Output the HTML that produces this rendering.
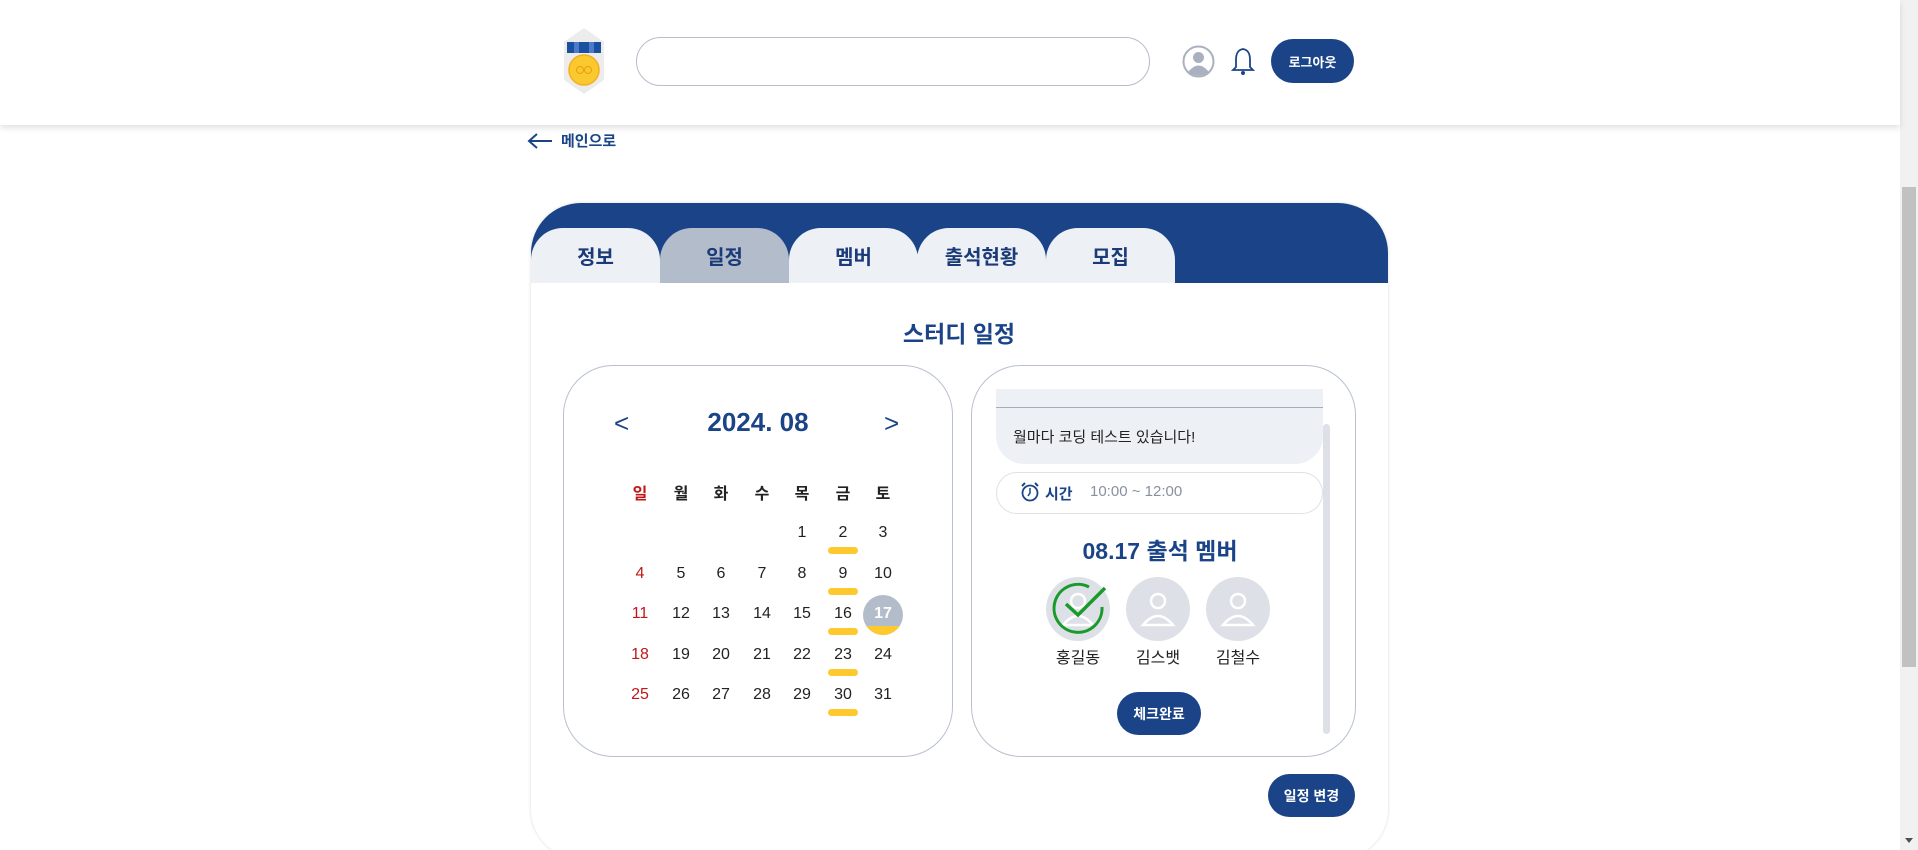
<!DOCTYPE html>
<html><head><meta charset="utf-8"><style>
*{box-sizing:border-box;margin:0;padding:0}
html{height:850px;overflow:hidden}
body{width:1918px;height:850px;overflow:hidden;background:#fff;font-family:"Liberation Sans","Noto Sans CJK KR",sans-serif;position:relative;color:#222}
.a{position:absolute}
.navy{color:#1b4488}
.hdr{left:0;top:0;width:1900px;height:125px;background:#fff;box-shadow:0 3px 6px rgba(0,0,0,.12);z-index:2}
.btn{background:#1b4488;color:#fff;border-radius:22px;font-size:14px;font-weight:bold;display:flex;align-items:center;justify-content:center}
.tab{top:228px;width:129px;height:55px;background:#edf1f6;border-radius:32px 32px 0 0;font-size:20px;font-weight:bold;color:#1b3a78;display:flex;align-items:center;justify-content:center}
.d{width:40px;text-align:center;font-size:16px;transform:translateX(-20px)}
.u{width:30px;height:7px;background:#fdc92e;border-radius:4px;transform:translateX(-15px)}
.av{width:64px;height:64px;border-radius:50%;background:#dde0e6;transform:translate(-32px,-32px)}
.nm{font-size:16px;width:80px;text-align:center;transform:translateX(-40px)}
</style></head><body>
<div class="a hdr">
  <svg class="a" style="left:563px;top:28px" width="42" height="66" viewBox="0 0 42 66">
    <polygon points="21,0 41,14 41,52 21,66 1,52 1,14" fill="#ececec"/>
    <rect x="4" y="14" width="7" height="11" fill="#1b4fa0"/><rect x="11" y="14" width="5" height="11" fill="#4d7bc9"/><rect x="16" y="14" width="10" height="11" fill="#1b4fa0"/><rect x="26" y="14" width="5" height="11" fill="#4d7bc9"/><rect x="31" y="14" width="7" height="11" fill="#1b4fa0"/>
    <circle cx="21" cy="42" r="15" fill="#fcc830" stroke="#f1b01d" stroke-width="1.5"/>
    <circle cx="17" cy="42" r="3.5" fill="none" stroke="#e6a810" stroke-width="1.2"/><circle cx="25" cy="42" r="3.5" fill="none" stroke="#e6a810" stroke-width="1.2"/>
  </svg>
  <div class="a" style="left:636px;top:37px;width:514px;height:49px;border:1px solid #b6bdcb;border-radius:25px"></div>
  <svg class="a" style="left:1182px;top:45px" width="33" height="33" viewBox="0 0 33 33"><circle cx="16.5" cy="16.5" r="15" fill="#fff" stroke="#a9b1c0" stroke-width="2"/><circle cx="16.5" cy="12.5" r="5.5" fill="#a9b1c0"/><path d="M6 27 Q16.5 14 27 27 Q16.5 34 6 27Z" fill="#a9b1c0"/></svg>
  <svg class="a" style="left:1231px;top:47px" width="24" height="29" viewBox="0 0 24 29"><path d="M12 2 C6 3 5 8 5 13 L5 20 L2 23 L22 23 L19 20 L19 13 C19 8 18 3 12 2Z" fill="none" stroke="#1b4488" stroke-width="1.8"/><circle cx="12" cy="26" r="2" fill="#1b4488"/></svg>
  <div class="a btn" style="left:1271px;top:39px;width:83px;height:44px;font-size:13px">로그아웃</div>
</div>
<div class="a" style="left:1900px;top:0;width:18px;height:850px;background:#f1f1f1"></div>
<div class="a" style="left:1902px;top:187px;width:14px;height:480px;background:#c1c1c1"></div>
<div class="a" style="left:1905px;top:838px;width:0;height:0;border-left:4px solid transparent;border-right:4px solid transparent;border-top:5px solid #505050"></div>

<svg class="a" style="left:527px;top:132px" width="26" height="18" viewBox="0 0 26 18"><path d="M25 9 H3 M10 2 L2 9 L10 16" fill="none" stroke="#1b4488" stroke-width="2"/></svg>
<div class="a navy" style="left:561px;top:130px;font-size:15px;font-weight:bold">메인으로</div>

<div class="a" style="left:531px;top:203px;width:857px;height:656px;background:#fff;border-radius:50px;box-shadow:0 0 3px rgba(0,0,0,.15);overflow:hidden">
  <div class="a" style="left:0;top:0;width:857px;height:80px;background:#1b4488"></div>
</div>
<div class="a tab" style="left:531px">정보</div>
<div class="a tab" style="left:660px;background:#b3bccb">일정</div>
<div class="a tab" style="left:789px">멤버</div>
<div class="a tab" style="left:917px">출석현황</div>
<div class="a tab" style="left:1046px">모집</div>

<div class="a navy" style="left:859px;top:315px;width:200px;text-align:center;font-size:23px;font-weight:bold">스터디 일정</div>

<div class="a" style="left:563px;top:365px;width:390px;height:392px;border:1px solid #b8c0cf;border-radius:50px"></div>
<div class="a navy" style="left:614px;top:408px;font-size:26px">&lt;</div>
<div class="a navy" style="left:884px;top:408px;font-size:26px">&gt;</div>
<div class="a navy" style="left:658px;top:407px;width:200px;text-align:center;font-size:26px;font-weight:bold">2024. 08</div>

<div class="a d" style="left:640px;top:480px;font-weight:bold;color:#c01818">일</div>
<div class="a d" style="left:681px;top:480px;font-weight:bold">월</div>
<div class="a d" style="left:721px;top:480px;font-weight:bold">화</div>
<div class="a d" style="left:762px;top:480px;font-weight:bold">수</div>
<div class="a d" style="left:802px;top:480px;font-weight:bold">목</div>
<div class="a d" style="left:843px;top:480px;font-weight:bold">금</div>
<div class="a d" style="left:883px;top:480px;font-weight:bold">토</div>

<div class="a" style="left:863px;top:595px;width:40px;height:40px;border-radius:50%;background:#b3bccb;overflow:hidden"><div class="a" style="left:0;top:31px;width:40px;height:9px;background:#fdc92e"></div></div>

<div class="a u" style="left:843px;top:547px"></div>
<div class="a u" style="left:843px;top:588px"></div>
<div class="a u" style="left:843px;top:628px"></div>
<div class="a u" style="left:843px;top:669px"></div>
<div class="a u" style="left:843px;top:709px"></div>

<div class="a d" style="left:802px;top:524px">1</div><div class="a d" style="left:843px;top:524px">2</div><div class="a d" style="left:883px;top:524px">3</div>
<div class="a d" style="left:640px;top:565px;color:#c01818">4</div><div class="a d" style="left:681px;top:565px">5</div><div class="a d" style="left:721px;top:565px">6</div><div class="a d" style="left:762px;top:565px">7</div><div class="a d" style="left:802px;top:565px">8</div><div class="a d" style="left:843px;top:565px">9</div><div class="a d" style="left:883px;top:565px">10</div>
<div class="a d" style="left:640px;top:605px;color:#c01818">11</div><div class="a d" style="left:681px;top:605px">12</div><div class="a d" style="left:721px;top:605px">13</div><div class="a d" style="left:762px;top:605px">14</div><div class="a d" style="left:802px;top:605px">15</div><div class="a d" style="left:843px;top:605px">16</div><div class="a d" style="left:883px;top:605px;color:#fff;font-weight:bold">17</div>
<div class="a d" style="left:640px;top:646px;color:#c01818">18</div><div class="a d" style="left:681px;top:646px">19</div><div class="a d" style="left:721px;top:646px">20</div><div class="a d" style="left:762px;top:646px">21</div><div class="a d" style="left:802px;top:646px">22</div><div class="a d" style="left:843px;top:646px">23</div><div class="a d" style="left:883px;top:646px">24</div>
<div class="a d" style="left:640px;top:686px;color:#c01818">25</div><div class="a d" style="left:681px;top:686px">26</div><div class="a d" style="left:721px;top:686px">27</div><div class="a d" style="left:762px;top:686px">28</div><div class="a d" style="left:802px;top:686px">29</div><div class="a d" style="left:843px;top:686px">30</div><div class="a d" style="left:883px;top:686px">31</div>

<div class="a" style="left:971px;top:365px;width:385px;height:392px;border:1px solid #b8c0cf;border-radius:50px"></div>
<div class="a" style="left:996px;top:389px;width:327px;height:75px;background:#edf1f6;border-radius:0 0 28px 28px"></div>
<div class="a" style="left:996px;top:407px;width:327px;height:1px;background:#a6aebd"></div>
<div class="a" style="left:1013px;top:426px;font-size:15px">월마다 코딩 테스트 있습니다!</div>
<div class="a" style="left:996px;top:472px;width:327px;height:42px;border:1px solid #dde1e8;border-radius:21px"></div>
<svg class="a" style="left:1020px;top:482px" width="20" height="20" viewBox="0 0 20 20"><circle cx="10" cy="11" r="7.5" fill="none" stroke="#1b4488" stroke-width="1.8"/><path d="M10 6 V11 L8 14" fill="none" stroke="#1b4488" stroke-width="1.5"/><path d="M2 4 L5 1 M18 4 L15 1" stroke="#1b4488" stroke-width="2"/></svg>
<div class="a navy" style="left:1045px;top:483px;font-size:15px;font-weight:bold">시간</div>
<div class="a" style="left:1090px;top:483px;font-size:15px;color:#8890a0">10:00 ~ 12:00</div>
<div class="a" style="left:1323px;top:424px;width:7px;height:310px;background:#dde0e6;border-radius:4px"></div>

<div class="a navy" style="left:1060px;top:532px;width:200px;text-align:center;font-size:23px;font-weight:bold">08.17 출석 멤버</div>
<div class="a av" style="left:1078px;top:609px"></div>
<div class="a av" style="left:1158px;top:609px"></div>
<div class="a av" style="left:1238px;top:609px"></div>
<svg class="a" style="left:1126px;top:577px" width="224" height="64" viewBox="0 0 224 64">
  <g fill="none" stroke="#fff" stroke-width="2.5"><circle cx="32" cy="24" r="7"/><path d="M17 48 Q32 30 47 48 Z"/><circle cx="112" cy="24" r="7"/><path d="M97 48 Q112 30 127 48 Z"/></g>
</svg>
<svg class="a" style="left:1046px;top:577px" width="64" height="64" viewBox="0 0 64 64">
  <g fill="none" stroke="#fff" stroke-width="2.5"><circle cx="32" cy="24" r="7"/><path d="M17 48 Q32 30 47 48 Z"/></g>
  <path d="M56 30 A24 24 0 1 1 43 10" fill="none" stroke="#1a9a2a" stroke-width="3"/>
  <path d="M20 27 L32 38 L59 11" fill="none" stroke="#1a9a2a" stroke-width="3.5"/>
</svg>
<div class="a nm" style="left:1078px;top:644px">홍길동</div>
<div class="a nm" style="left:1158px;top:644px">김스뱃</div>
<div class="a nm" style="left:1238px;top:644px">김철수</div>
<div class="a btn" style="left:1117px;top:692px;width:84px;height:43px">체크완료</div>
<div class="a btn" style="left:1268px;top:774px;width:87px;height:43px">일정 변경</div>
</body></html>
